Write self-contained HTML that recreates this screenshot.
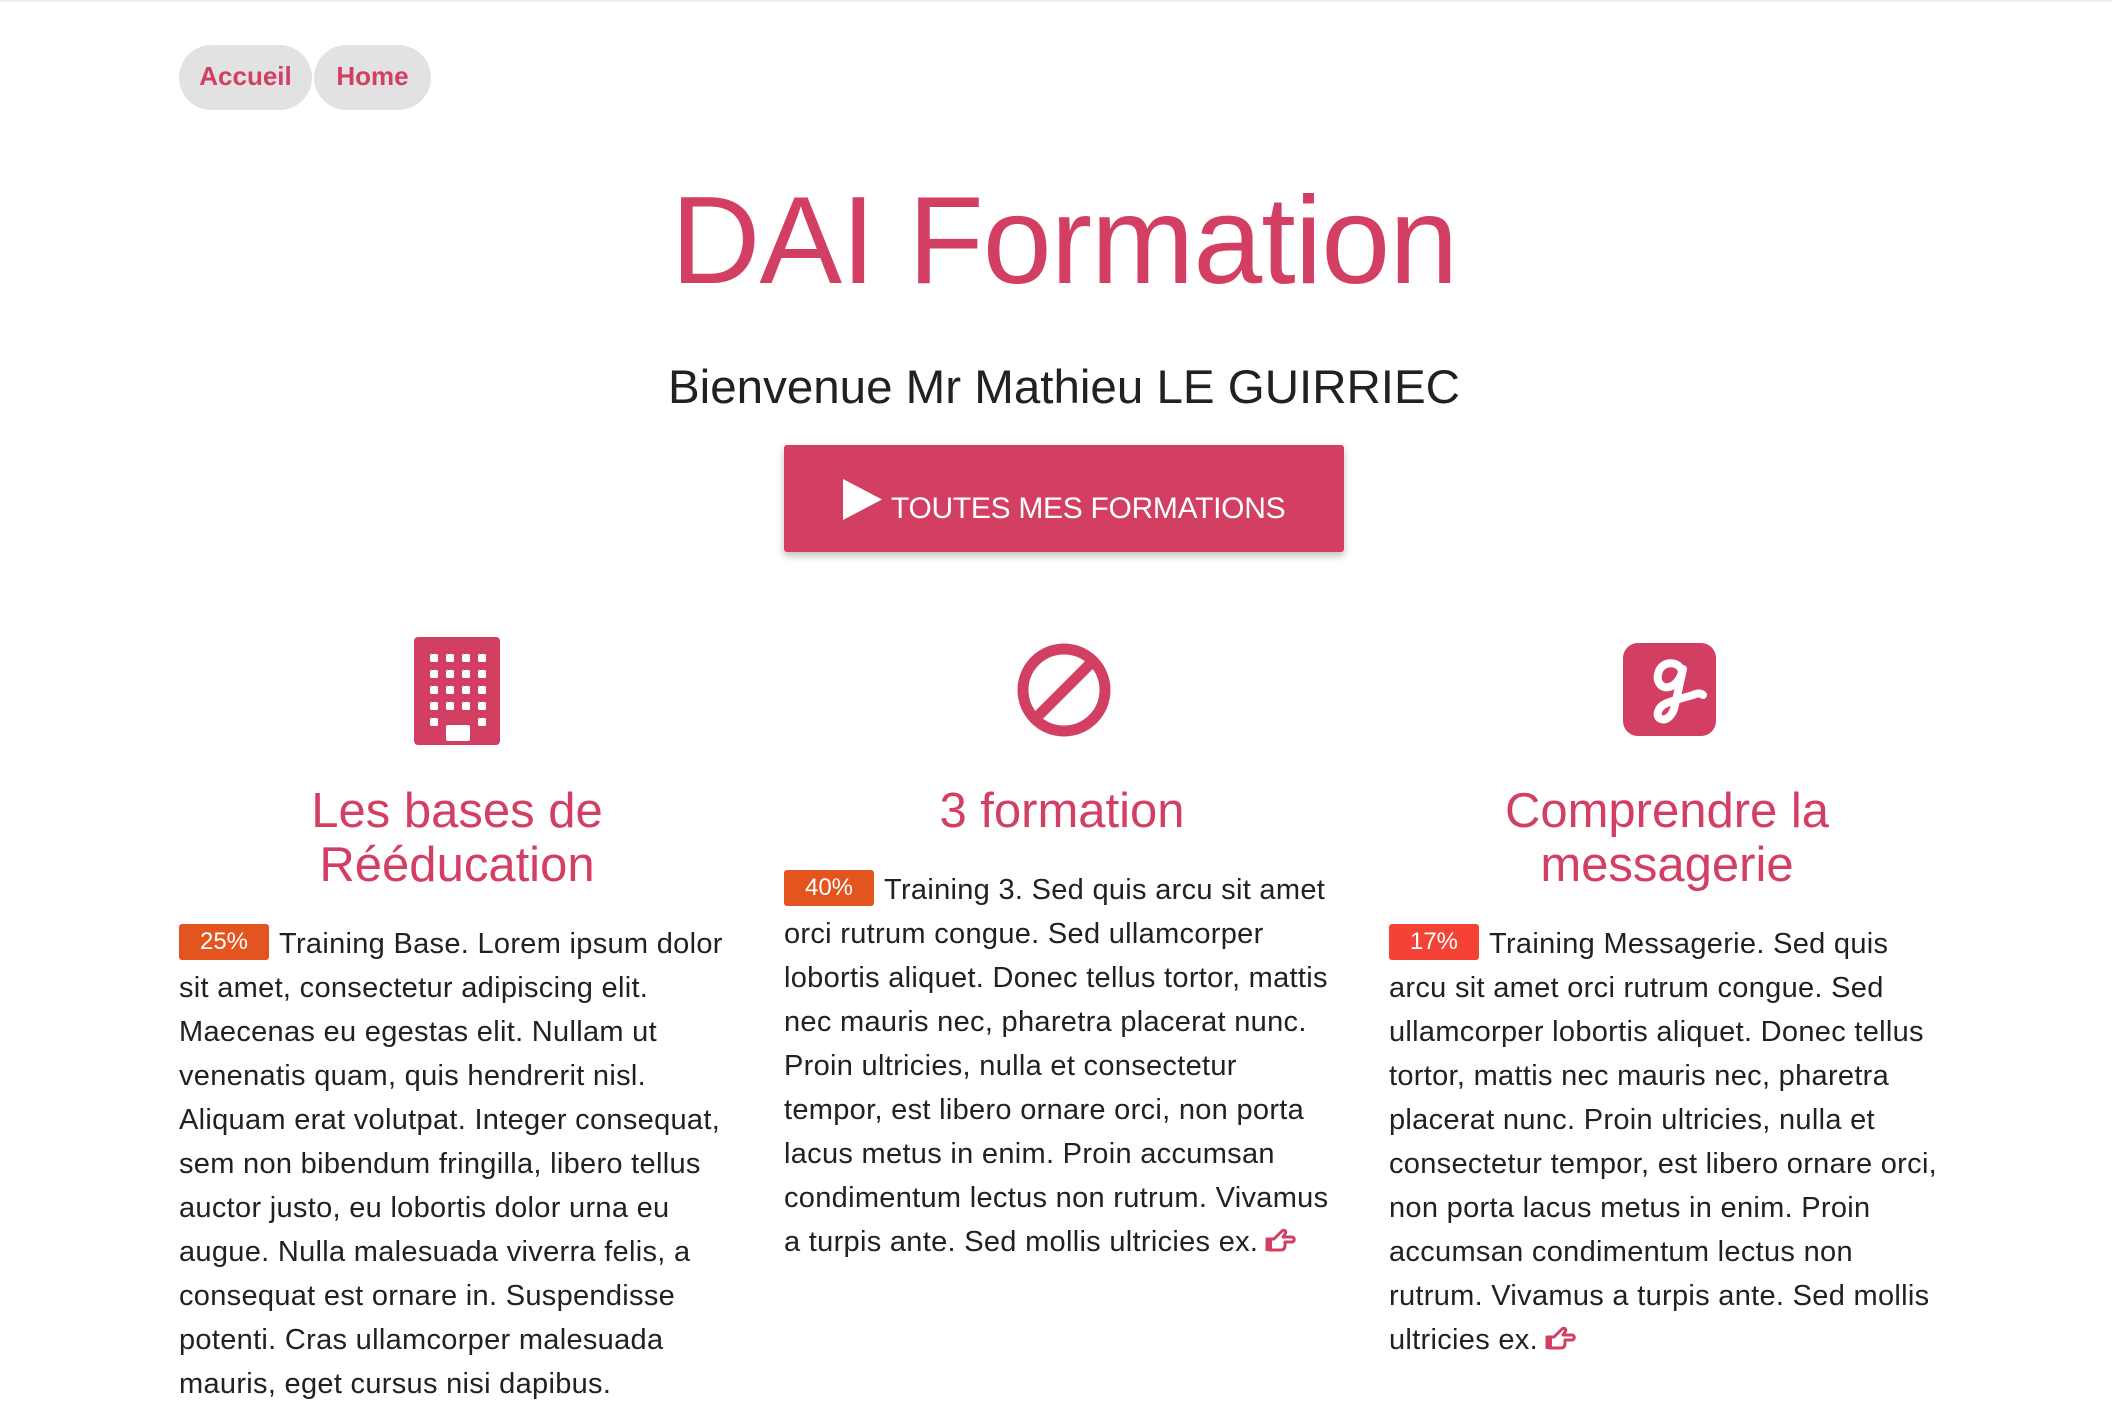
<!DOCTYPE html>
<html><head><meta charset="utf-8"><style>
*{margin:0;padding:0;box-sizing:border-box}
body{width:2112px;height:1372px;background:#fff;font-family:"Liberation Sans",Arial,sans-serif;position:relative;overflow:hidden;color:#212121;border-top:2px solid #f0f0f0}
.pill{position:absolute;top:43px;height:65px;background:#e2e2e2;border-radius:33px;color:#d33f63;font-size:26px;font-weight:bold;line-height:63px;text-align:center}
h1{position:absolute;left:0;width:2128px;text-align:center;top:177px;font-size:124px;line-height:124px;font-weight:normal;color:#d33f63;letter-spacing:-1px}
h2{position:absolute;left:0;width:2128px;text-align:center;top:358px;font-size:47.5px;line-height:55px;font-weight:normal;color:#212121}
.btn{position:absolute;left:784px;top:443px;width:560px;height:107px;background:#d33f63;border-radius:3px;box-shadow:0 4px 8px rgba(0,0,0,.25)}
.col{position:absolute;top:782px;width:600px}
.col h3{width:556px;font-size:49px;line-height:54px;font-weight:normal;color:#d33f63;text-align:center}
.col p{margin-top:30px;font-size:29px;line-height:44px;white-space:nowrap;letter-spacing:0.3px}
.badge{display:inline-block;width:90px;height:36px;line-height:36px;color:#fff;font-size:24px;text-align:center;border-radius:3px;vertical-align:4px;margin-right:10px;letter-spacing:0}
.hand{display:inline-block;vertical-align:-4px;margin-left:6px}
</style></head><body>
<div class="pill" style="left:179px;width:133px">Accueil</div>
<div class="pill" style="left:314px;width:117px">Home</div>
<h1>DAI Formation</h1>
<h2>Bienvenue Mr Mathieu LE GUIRRIEC</h2>
<div class="btn">
<svg style="position:absolute;left:59px;top:34px" width="39" height="41" viewBox="0 0 39 41"><polygon points="0,0 39,20.5 0,41" fill="#fff"/></svg>
<div style="position:absolute;left:107px;top:47px;color:#fff;font-size:30px;line-height:34px;letter-spacing:-0.3px">TOUTES MES FORMATIONS</div>
</div>
<svg style="position:absolute;left:414px;top:635px" width="86" height="108" viewBox="0 0 86 108">
<rect x="0" y="0" width="86" height="108" rx="4" fill="#d33f63"/>
<g fill="#fff">
<rect x="16" y="17" width="8" height="8" rx="1.5"/><rect x="32" y="17" width="8" height="8" rx="1.5"/><rect x="48" y="17" width="8" height="8" rx="1.5"/><rect x="64" y="17" width="8" height="8" rx="1.5"/>
<rect x="16" y="33" width="8" height="8" rx="1.5"/><rect x="32" y="33" width="8" height="8" rx="1.5"/><rect x="48" y="33" width="8" height="8" rx="1.5"/><rect x="64" y="33" width="8" height="8" rx="1.5"/>
<rect x="16" y="49" width="8" height="8" rx="1.5"/><rect x="32" y="49" width="8" height="8" rx="1.5"/><rect x="48" y="49" width="8" height="8" rx="1.5"/><rect x="64" y="49" width="8" height="8" rx="1.5"/>
<rect x="16" y="65" width="8" height="8" rx="1.5"/><rect x="32" y="65" width="8" height="8" rx="1.5"/><rect x="48" y="65" width="8" height="8" rx="1.5"/><rect x="64" y="65" width="8" height="8" rx="1.5"/>
<rect x="16" y="81" width="8" height="8" rx="1.5"/><rect x="64" y="81" width="8" height="8" rx="1.5"/>
<rect x="32" y="88" width="24" height="16" rx="2"/>
</g></svg>
<svg style="position:absolute;left:1016px;top:640px" width="96" height="96" viewBox="0 0 96 96">
<circle cx="48" cy="48" r="41" fill="none" stroke="#d33f63" stroke-width="11"/>
<line x1="77" y1="19" x2="19" y2="77" stroke="#d33f63" stroke-width="11"/>
</svg>
<svg style="position:absolute;left:1623px;top:641px" width="93" height="93" viewBox="0 0 93 93">
<rect width="93" height="93" rx="15" fill="#d33f63"/>
<path d="M58 26 C54 18 40 18 36 28 C32 38 38 46 46 44 C54 42 58 34 60 26 L52 62 C50 72 44 78 38 76 C32 74 34 64 44 60 C54 56 64 54 70 52 C74 50 78 50 80 52" fill="none" stroke="#fff" stroke-width="8" stroke-linecap="round" stroke-linejoin="round"/>
</svg>
<div class="col" style="left:179px"><h3>Les bases de<br>Rééducation</h3>
<p><span class="badge" style="background:#e4541f">25%</span>Training Base. Lorem ipsum dolor<br>sit amet, consectetur adipiscing elit.<br>Maecenas eu egestas elit. Nullam ut<br>venenatis quam, quis hendrerit nisl.<br>Aliquam erat volutpat. Integer consequat,<br>sem non bibendum fringilla, libero tellus<br>auctor justo, eu lobortis dolor urna eu<br>augue. Nulla malesuada viverra felis, a<br>consequat est ornare in. Suspendisse<br>potenti. Cras ullamcorper malesuada<br>mauris, eget cursus nisi dapibus.</p></div>
<div class="col" style="left:784px"><h3>3 formation</h3>
<p><span class="badge" style="background:#e4541f">40%</span>Training 3. Sed quis arcu sit amet<br>orci rutrum congue. Sed ullamcorper<br>lobortis aliquet. Donec tellus tortor, mattis<br>nec mauris nec, pharetra placerat nunc.<br>Proin ultricies, nulla et consectetur<br>tempor, est libero ornare orci, non porta<br>lacus metus in enim. Proin accumsan<br>condimentum lectus non rutrum. Vivamus<br>a turpis ante. Sed mollis ultricies ex.<svg class="hand" width="32" height="28" viewBox="0 0 32 28"><path d="M3 12 L10 12 L18 4 C20 2 23 4 21 7 L19 10 L28 10 C31 10 31 15 28 15 L21 15 L21 18 C21 21 20 23 17 23 L6 23 C4 23 3 22 3 20 Z M3 12 L3 24" fill="none" stroke="#d33f63" stroke-width="3" stroke-linejoin="round"/><rect x="2" y="12" width="6" height="12" fill="#d33f63"/></svg></p></div>
<div class="col" style="left:1389px"><h3>Comprendre la<br>messagerie</h3>
<p><span class="badge" style="background:#f44336">17%</span>Training Messagerie. Sed quis<br>arcu sit amet orci rutrum congue. Sed<br>ullamcorper lobortis aliquet. Donec tellus<br>tortor, mattis nec mauris nec, pharetra<br>placerat nunc. Proin ultricies, nulla et<br>consectetur tempor, est libero ornare orci,<br>non porta lacus metus in enim. Proin<br>accumsan condimentum lectus non<br>rutrum. Vivamus a turpis ante. Sed mollis<br>ultricies ex.<svg class="hand" width="32" height="28" viewBox="0 0 32 28"><path d="M3 12 L10 12 L18 4 C20 2 23 4 21 7 L19 10 L28 10 C31 10 31 15 28 15 L21 15 L21 18 C21 21 20 23 17 23 L6 23 C4 23 3 22 3 20 Z M3 12 L3 24" fill="none" stroke="#d33f63" stroke-width="3" stroke-linejoin="round"/><rect x="2" y="12" width="6" height="12" fill="#d33f63"/></svg></p></div>
</body></html>
